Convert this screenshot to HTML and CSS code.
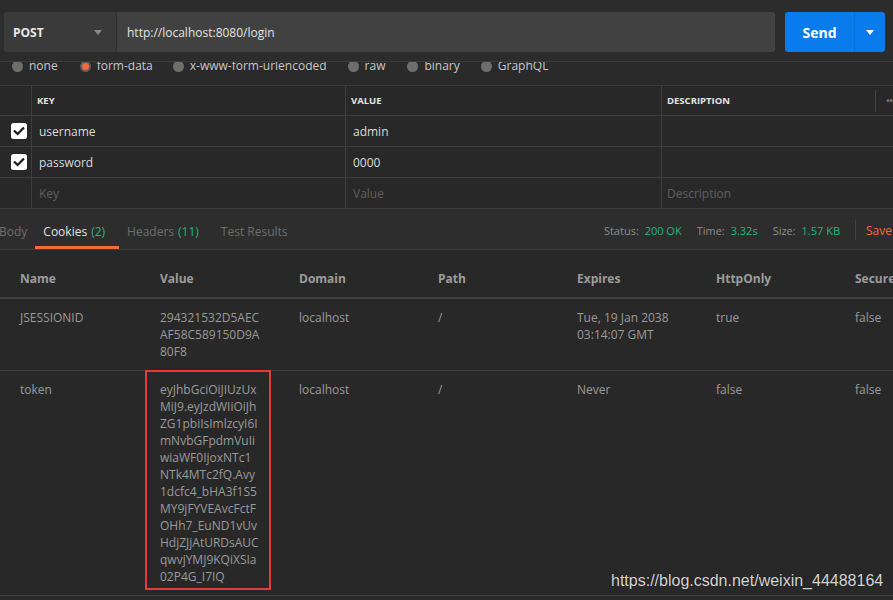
FILE: index.html
```html
<!DOCTYPE html>
<html>
<head>
<meta charset="utf-8">
<link rel="stylesheet" href="styles.css">
</head>
<body>
<div class="app">
  <div class="request-area">
    <div class="request">
      <div class="method"><span class="method-label">POST</span><span class="caret caret-gray"></span></div>
      <div class="url">http://localhost:8080/login</div>
      <div class="send">
        <span class="send-label">Send</span>
        <span class="send-drop"><span class="caret caret-white"></span></span>
      </div>
    </div>
  </div>

  <div class="bodytypes">
    <span class="radio"><span class="dot"></span>none</span>
    <span class="radio"><span class="dot dot-on"></span>form-data</span>
    <span class="radio"><span class="dot"></span>x-www-form-urlencoded</span>
    <span class="radio"><span class="dot"></span>raw</span>
    <span class="radio"><span class="dot"></span>binary</span>
    <span class="radio"><span class="dot"></span>GraphQL</span>
  </div>

  <div class="params">
    <div class="pc pc-check head"></div>
    <div class="pc head">KEY</div>
    <div class="pc head">VALUE</div>
    <div class="pc head pc-last"><span>DESCRIPTION</span><span class="more"><span class="more-sep"></span><span class="dots">••</span></span></div>

    <div class="pc pc-check"><svg class="cb" viewBox="0 0 16 16" width="16" height="16"><rect x="0" y="0" width="16" height="16" rx="2.5" fill="#ffffff"/><path d="M3.8 8.3 L6.6 11 L12.2 5.2" fill="none" stroke="#1a1a1a" stroke-width="2.2" stroke-linecap="square"/></svg></div>
    <div class="pc">username</div>
    <div class="pc">admin</div>
    <div class="pc pc-last"></div>

    <div class="pc pc-check"><svg class="cb" viewBox="0 0 16 16" width="16" height="16"><rect x="0" y="0" width="16" height="16" rx="2.5" fill="#ffffff"/><path d="M3.8 8.3 L6.6 11 L12.2 5.2" fill="none" stroke="#1a1a1a" stroke-width="2.2" stroke-linecap="square"/></svg></div>
    <div class="pc">password</div>
    <div class="pc">0000</div>
    <div class="pc pc-last"></div>

    <div class="pc pc-check"></div>
    <div class="pc ph">Key</div>
    <div class="pc ph">Value</div>
    <div class="pc pc-last ph">Description</div>
  </div>

  <div class="resp-tabs">
    <div class="tabs">
      <span class="tab">Body</span>
      <span class="tab tab-active">Cookies <span class="count">(2)</span></span>
      <span class="tab">Headers <span class="count">(11)</span></span>
      <span class="tab">Test Results</span>
    </div>
    <div class="meta">
      <span class="meta-item">Status: <span class="ok">200 OK</span></span>
      <span class="meta-item">Time: <span class="ok">3.32s</span></span>
      <span class="meta-item">Size: <span class="ok">1.57 KB</span></span>
      <span class="meta-sep"></span>
      <span class="save">Save</span>
    </div>
  </div>

  <div class="cookies">
    <div class="ch">Name</div>
    <div class="ch">Value</div>
    <div class="ch">Domain</div>
    <div class="ch">Path</div>
    <div class="ch">Expires</div>
    <div class="ch">HttpOnly</div>
    <div class="ch">Secure</div>

    <div class="cc">JSESSIONID</div>
    <div class="cc">294321532D5AEC<br>AF58C589150D9A<br>80F8</div>
    <div class="cc">localhost</div>
    <div class="cc">/</div>
    <div class="cc">Tue, 19 Jan 2038<br>03:14:07 GMT</div>
    <div class="cc">true</div>
    <div class="cc">false</div>

    <div class="cc">token</div>
    <div class="cc">eyJhbGciOiJIUzUx<br>MiJ9.eyJzdWIiOiJh<br>ZG1pbiIsImlzcyI6I<br>mNvbGFpdmVuIi<br>wiaWF0IjoxNTc1<br>NTk4MTc2fQ.Avy<br>1dcfc4_bHA3f1S5<br>MY9jFYVEAvcFctF<br>OHh7_EuND1vUv<br>HdjZJjAtURDsAUC<br>qwvjYMJ9KQiXSIa<br>02P4G_I7IQ<span class="highlight"></span></div>
    <div class="cc">localhost</div>
    <div class="cc">/</div>
    <div class="cc">Never</div>
    <div class="cc">false</div>
    <div class="cc">false</div>
  </div>

  <div class="watermark">https://blog.csdn.net/weixin_44488164</div>
</div>
</body>
</html>
```

FILE: styles.css
```css
html, body {
  margin: 0;
  padding: 0;
  background: #282828;
}
body {
  font-family: "Open Sans", "Noto Sans", sans-serif;
  font-size: 12px;
  color: #d0d0d0;
  width: 893px;
  height: 600px;
  overflow: hidden;
}
.app {
  position: relative;
  width: 893px;
  height: 600px;
  overflow: hidden;
  background: #282828;
}

/* request bar */
.request-area {
  background: #2c2c2c;
  padding: 12px 8px 9px 4px;
  border-bottom: 1px solid #3b3b3b;
  box-shadow: inset 88px 1px 0 #2c2c2c, inset 0 1px 0 #3c3c3c;
}
.request {
  display: flex;
  height: 40px;
}
.method {
  width: 113px;
  box-sizing: border-box;
  display: flex;
  align-items: center;
  justify-content: space-between;
  padding: 0 14px 0 9px;
  background: #3a3a3a;
  border-right: 1px solid #2f2f2f;
  border-radius: 3px 0 0 3px;
}
.method-label {
  font-weight: 700;
  font-size: 12px;
  color: #e8e8e8;
}
.caret {
  width: 0;
  height: 0;
  border-left: 4px solid transparent;
  border-right: 4px solid transparent;
  border-top: 5px solid #8a8a8a;
}
.caret-white { border-top-color: #ffffff; }
.url {
  flex: 1;
  display: flex;
  align-items: center;
  padding-left: 10px;
  background: #414141;
  color: #e2e2e2;
  border-radius: 0 3px 3px 0;
}
.send {
  width: 100px;
  margin-left: 10px;
  display: flex;
  background: #097bed;
  border-radius: 3px;
  color: #ffffff;
}
.send-label {
  width: 69px;
  display: flex;
  align-items: center;
  justify-content: center;
  font-weight: 700;
  font-size: 14px;
  border-right: 1px solid #0a6ccf;
}
.send-drop {
  flex: 1;
  display: flex;
  align-items: center;
  justify-content: center;
}

/* body types */
.bodytypes {
  height: 23px;
  background: #2a2a2a;
  border-bottom: 1px solid #3b3b3b;
  display: flex;
  align-items: flex-start;
  overflow: hidden;
  color: #c8c8c8;
  padding-left: 12px;
}
.radio {
  display: flex;
  align-items: center;
  margin-top: -4px;
  height: 16px;
  line-height: 16px;
  margin-right: 22px;
}
.radio:nth-child(2) { margin-right: 20px; }
.radio:nth-child(3) { margin-right: 21px; }
.radio:nth-child(4) { margin-right: 22px; }
.radio:nth-child(5) { margin-right: 21px; }
.dot {
  width: 11px;
  height: 11px;
  border-radius: 50%;
  background: #6e6e6e;
  margin-right: 6px;
  box-sizing: border-box;
}
.dot-on {
  background: #f26b3a;
  border: 2px solid #5e5e5e;
}

/* params table */
.params {
  display: grid;
  grid-template-columns: 32px 314px 316px 1fr;
  grid-auto-rows: 31px;
  grid-template-rows: 30px;
  background: #282828;
}
.pc {
  box-sizing: border-box;
  border-right: 1px solid #3e3e3e;
  border-bottom: 1px solid #3e3e3e;
  display: flex;
  align-items: center;
  padding-left: 7px;
  color: #dcdcdc;
  font-size: 12px;
}
.pc-check { padding-left: 11px; }
.pc-last { border-right: none; padding-left: 5px; }
.head {
  font-size: 9.5px;
  font-weight: 700;
  color: #e4e4e4;
  padding-left: 5px;
}
.pc-last.head { justify-content: space-between; padding-right: 0; }
.more {
  display: flex;
  align-items: center;
  height: 100%;
}
.more-sep {
  width: 1px;
  height: 22px;
  background: #444;
  margin-right: 10px;
}
.dots {
  color: #7a7a7a;
  font-size: 9px;
}
.ph { color: #5f5f5f; }
.cb { display: block; }

/* response tabs */
.resp-tabs {
  height: 40px;
  background: #2d2d2d;
  border-bottom: 1px solid #3c3c3c;
  display: flex;
  align-items: stretch;
}
.tabs {
  display: flex;
  margin-left: -9px;
}
.tab {
  display: flex;
  align-items: center;
  padding: 7px 14px 0 8px;
  color: #6e6e6e;
  font-size: 12px;
  box-sizing: border-box;
  border-bottom: 3px solid transparent;
}
.tab:first-child { padding-right: 8px; }
.tab-active {
  color: #e0e0e0;
  border-bottom-color: #f26b3a;
}
.count { color: #26b47f; margin-left: 4px; }
.meta {
  margin-left: auto;
  display: flex;
  align-items: center;
  padding-top: 2px;
  color: #8c8c8c;
  font-size: 11px;
}
.meta-item { margin-right: 15px; }
.ok { color: #26b47f; margin-left: 3px; }
.meta-sep {
  width: 1px;
  height: 20px;
  background: #444;
  margin-right: 10px;
}
.save {
  color: #f26b3a;
  font-size: 12px;
  width: 27px;
  overflow: hidden;
  white-space: nowrap;
}

/* cookies table */
.cookies {
  display: grid;
  grid-template-columns: 140px 139px 139px 139px 139px 139px 139px;
  grid-template-rows: 49px;
  background: #282828;
  width: 974px;
}
.ch {
  display: flex;
  align-items: center;
  padding-left: 20px;
  padding-top: 9px;
  box-sizing: border-box;
  font-weight: 700;
  color: #9c9c9c;
  font-size: 12px;
  border-bottom: 2px solid #404040;
  height: 49px;
}
.cc {
  padding: 10px 0 10px 20px;
  line-height: 17px;
  color: #9a9a9a;
  font-size: 12px;
  border-bottom: 1px solid #3e3e3e;
  position: relative;
}
.highlight {
  position: absolute;
  left: 5px;
  top: -1px;
  width: 126px;
  height: 220px;
  box-sizing: border-box;
  border: 2px solid #e83a3a;
}

.watermark {
  position: absolute;
  left: 611px;
  top: 572px;
  font-family: "Liberation Sans", Arial, sans-serif;
  font-size: 16px;
  color: #d4d4d4;
  text-shadow: 0 0 1px #111;
}
```
